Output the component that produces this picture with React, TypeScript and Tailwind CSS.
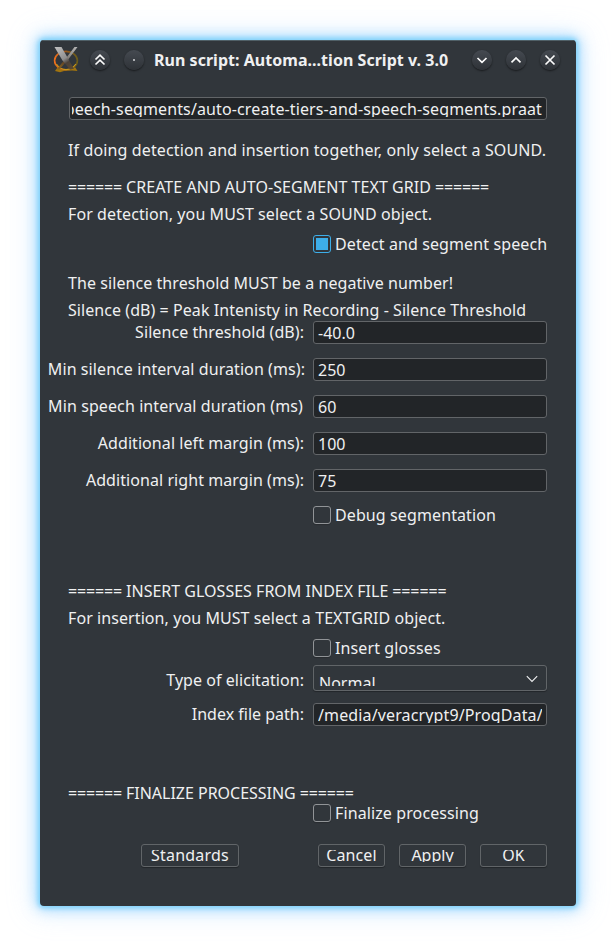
import type { ReactNode } from "react";

function Line({ children, className = "" }: { children: ReactNode; className?: string }) {
  return <p className={`pl-7 whitespace-pre ${className}`}>{children}</p>;
}

function Heading({ title, className = "" }: { title: string; className?: string }) {
  return (
    <p className={`pl-7 whitespace-pre ${className}`}>
      <span className="tracking-[-0.15px]">====== </span>
      {title}
      <span className="tracking-[-0.15px]"> ======</span>
    </p>
  );
}

function Field({
  label,
  value,
  className = "",
  labelClass = "pr-px tracking-[0.07px]",
  valueClass = "",
}: {
  label: string;
  value: string;
  className?: string;
  labelClass?: string;
  valueClass?: string;
}) {
  return (
    <div className={`flex h-[23px] ${className}`}>
      <div className={`w-[265px] shrink-0 whitespace-nowrap text-right ${labelClass}`}>{label}</div>
      <div className="ml-2 h-[23px] w-[234px] rounded-[3px] border border-[#626568] bg-[#222528] px-1">
        <div className={`h-[19px] overflow-hidden whitespace-nowrap ${valueClass}`}>{value}</div>
      </div>
    </div>
  );
}

function Check({ label, checked = false, className = "" }: { label: string; checked?: boolean; className?: string }) {
  return (
    <div className={`ml-[273px] flex h-[22px] items-start gap-1 ${className}`}>
      <span
        className={`mt-[2px] flex h-[18px] w-[18px] items-center justify-center rounded-[3px] border ${
          checked ? "border-[#3daee9]" : "border-[#919497] shadow-[0_1px_1px_rgba(0,0,0,0.2)]"
        }`}
      >
        {checked && <span className="h-3 w-3 bg-[#3daee9]" />}
      </span>
      <span className="whitespace-nowrap tracking-[0.11px]">{label}</span>
    </div>
  );
}

function PushButton({ label, className }: { label: string; className: string }) {
  return (
    <div
      className={`h-[23px] rounded-[3px] border border-[#616568] pt-[5px] text-center shadow-[0_1px_1px_rgba(0,0,0,0.3)] ${className}`}
    >
      <div className="h-3 overflow-hidden">
        <div className="-mt-[6px]">{label}</div>
      </div>
    </div>
  );
}

function TitleButton({ children, className = "" }: { children: ReactNode; className?: string }) {
  return (
    <span
      className={`h-5 w-5 shrink-0 rounded-full bg-linear-to-b from-[#454a51] to-[#2e3237] shadow-[0_1px_2px_rgba(0,0,0,0.55)] ${className}`}
    >
      <svg viewBox="0 0 20 20" className="h-5 w-5" fill="none" stroke="#fcfcfc" strokeWidth="1.7">
        {children}
      </svg>
    </span>
  );
}

function XLogo() {
  return (
    <svg viewBox="0 0 28 28" className="h-7 w-7 shrink-0" fill="none">
      <defs>
        <linearGradient id="ring" x1="0" y1="0" x2="1" y2="0">
          <stop offset="0" stopColor="#f0701c" />
          <stop offset="0.4" stopColor="#a8591c" />
          <stop offset="0.7" stopColor="#7d5a1e" />
          <stop offset="1" stopColor="#6b5c1a" />
        </linearGradient>
        <linearGradient id="bar" gradientUnits="userSpaceOnUse" x1="5" y1="1" x2="20" y2="24">
          <stop offset="0" stopColor="#bdbdbd" />
          <stop offset="0.5" stopColor="#8f8f8f" />
          <stop offset="0.68" stopColor="#4a4038" />
          <stop offset="1" stopColor="#5c4a30" />
        </linearGradient>
        <linearGradient id="arm" gradientUnits="userSpaceOnUse" x1="24" y1="1" x2="6" y2="24">
          <stop offset="0" stopColor="#b4b4b4" />
          <stop offset="0.45" stopColor="#85807a" />
          <stop offset="0.62" stopColor="#5c4028" />
          <stop offset="1" stopColor="#8a671c" />
        </linearGradient>
      </defs>
      <path d="M3 25 L5.5 21.5 L10 23 H18.5 L23 21 L25.5 25 L20 24.5 L12 25 L8 26.2 Z" fill="#a1740f" />
      <ellipse cx="14" cy="14.6" rx="11.4" ry="9.2" stroke="url(#ring)" strokeWidth="1.6" />
      <path d="M4.4 18 Q8 23.4 14 23.6 Q20 23.4 23.9 18" stroke="#c9981b" strokeWidth="1.1" />
      <path d="M22.5 1 H25.5 L16.5 13 L7.5 23.5 H4.5 L14.5 11.5 Z" fill="url(#arm)" />
      <path d="M2.5 1 H9.5 L22 23 H17.5 L10.5 14.5 Z" fill="url(#bar)" />
    </svg>
  );
}

export default function App() {
  return (
    <div className="h-[946px] w-[616px] bg-white p-10 font-['Noto_Sans',sans-serif] text-[16px] leading-[22px] text-[#eff0f1]">
      <main className="h-[866px] w-[536px] overflow-hidden rounded-[4px] bg-[#31363b] shadow-[0_0_5px_2px_#7ed2fa,0_0_14px_4px_rgba(125,200,252,0.6),0_0_28px_6px_rgba(160,210,255,0.28)]">
        <header className="flex h-[39px] items-center border-t border-[#506067] pl-3">
          <XLogo />
          <TitleButton className="ml-[10px]">
            <path d="M5.5 9.5 10 5.2 14.5 9.5M5.5 14.5 10 10.2 14.5 14.5" />
          </TitleButton>
          <TitleButton className="ml-[14px]">
            <circle cx="10" cy="10" r="1" fill="#d5d6d8" stroke="none" />
          </TitleButton>
          <h1 className="ml-[10px] w-[318px] shrink-0 whitespace-nowrap font-bold tracking-[0.03px]">
            Run script: Automa...tion Script v. 3.0
          </h1>
          <TitleButton>
            <path d="M5.5 8 10 12.3 14.5 8" />
          </TitleButton>
          <TitleButton className="ml-[14px]">
            <path d="M5.5 12.3 10 8 14.5 12.3" />
          </TitleButton>
          <TitleButton className="ml-[14px]">
            <path d="M5.5 5.5 14.5 14.5M14.5 5.5 5.5 14.5" />
          </TitleButton>
        </header>

        <div className="mt-[18px] ml-[29px] h-[23px] w-[478px] rounded-[3px] border border-[#626568] bg-[#222528] pr-1 pl-[2px]">
          <div className="flex h-[19px] justify-end overflow-hidden whitespace-nowrap tracking-[0.12px]">
            speech-segments/auto-create-tiers-and-speech-segments.praat
          </div>
        </div>

        <Line className="mt-[19px] tracking-[0.13px]">
          If doing detection and insertion together, only select a SOUND.
        </Line>
        <Heading className="mt-[15px] tracking-[0.05px]" title="CREATE AND AUTO-SEGMENT TEXT GRID" />
        <Line className="mt-[5px] tracking-[0.09px]">For detection, you MUST select a SOUND object.</Line>
        <Check className="mt-[8px]" label="Detect and segment speech" checked />
        <Line className="mt-[17px] tracking-[0.07px]">The silence threshold MUST be a negative number!</Line>
        <Line className="mt-[5px] tracking-[0.06px]">
          Silence (dB) = Peak Intenisty in Recording - Silence Threshold
        </Line>
        <Field label="Silence threshold (dB):" value="-40.0" />
        <Field
          className="mt-[14px]"
          label="Min silence interval duration (ms):"
          labelClass="pr-0 tracking-[0.08px]"
          value="250"
        />
        <Field
          className="mt-[14px]"
          label="Min speech interval duration (ms)"
          labelClass="pr-[2px] tracking-[0.1px]"
          value="60"
        />
        <Field className="mt-[14px]" label="Additional left margin (ms):" value="100" />
        <Field className="mt-[14px]" label="Additional right margin (ms):" value="75" />
        <Check className="mt-[12px]" label="Debug segmentation" />

        <Heading className="mt-[54px] tracking-[0.01px]" title="INSERT GLOSSES FROM INDEX FILE" />
        <Line className="mt-[5px] tracking-[0.08px]">For insertion, you MUST select a TEXTGRID object.</Line>
        <Check className="mt-[8px]" label="Insert glosses" />
        <div className="mt-[6px] flex h-[26px]">
          <div className="w-[264px] shrink-0 pt-1 text-right tracking-[0.05px]">Type of elicitation:</div>
          <div className="ml-[9px] flex h-[26px] w-[234px] justify-between rounded-[3px] border border-[#616568] pr-[8px] pl-[5px] shadow-[0_1px_1px_rgba(0,0,0,0.3)]">
            <div className="mt-[10px] h-[10px] overflow-hidden">
              <div className="-mt-1">Normal</div>
            </div>
            <svg viewBox="0 0 12 8" className="mt-[9px] h-2 w-3" fill="none" stroke="#eff0f1" strokeWidth="1.1">
              <path d="M.8 1.2 6 6.4 11.2 1.2" />
            </svg>
          </div>
        </div>
        <Field
          className="mt-[12px]"
          label="Index file path:"
          labelClass="pr-px"
          value="/media/veracrypt9/ProgData/"
          valueClass="tracking-[0.13px]"
        />

        <Heading className="mt-[56px] tracking-[-0.02px]" title="FINALIZE PROCESSING" />
        <Check className="-mt-[2px]" label="Finalize processing" />
        <footer className="mt-[20px] ml-[101px] flex">
          <PushButton label="Standards" className="w-[98px] tracking-[0.2px]" />
          <PushButton label="Cancel" className="ml-[79px] w-[67px] tracking-[0.1px]" />
          <PushButton label="Apply" className="ml-[14px] w-[67px]" />
          <PushButton label="OK" className="ml-[14px] w-[67px]" />
        </footer>
      </main>
    </div>
  );
}
